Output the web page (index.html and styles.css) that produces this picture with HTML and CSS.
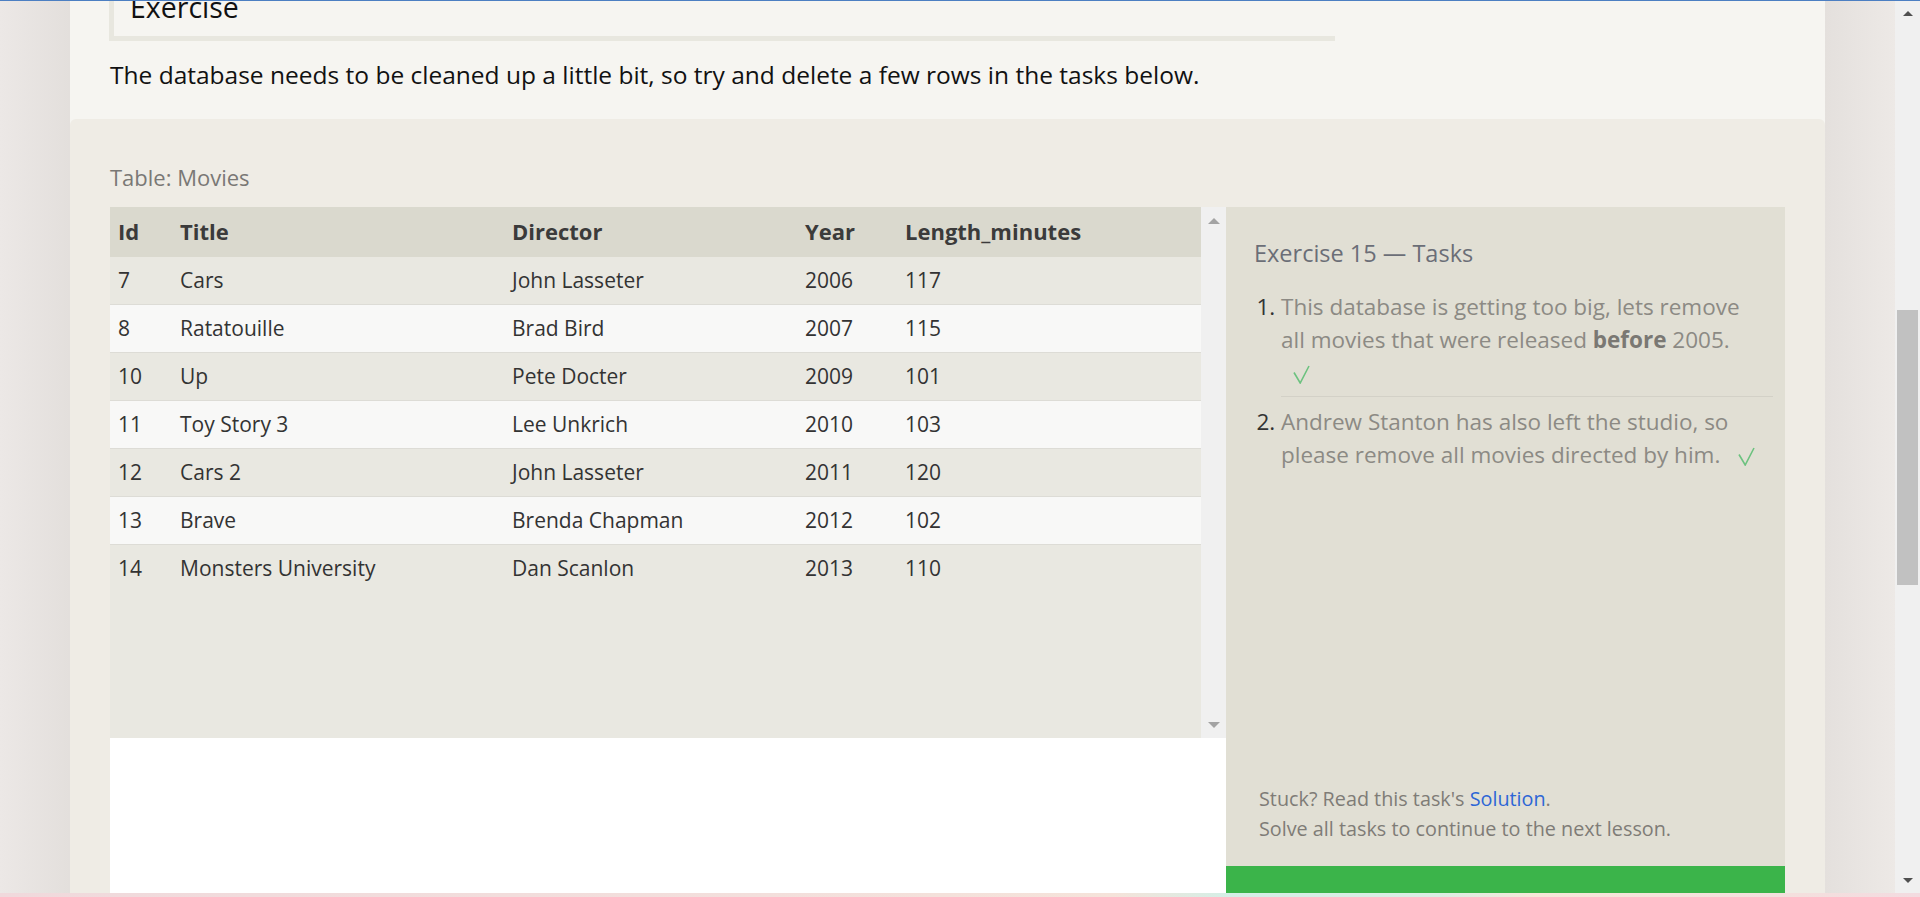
FILE: index.html
```html
<!DOCTYPE html>
<html lang="en">
<head>
<meta charset="utf-8">
<title>SQL Lesson — Deleting rows</title>
<link rel="stylesheet" href="styles.css">
</head>
<body>
<div class="topline"></div>
<div class="window">
  <div class="page">
    <div class="container">
      <section class="intro">
        <div class="exercise-box"><h2>Exercise</h2></div>
        <p>The database needs to be cleaned up a little bit, so try and delete a few rows in the tasks below.</p>
      </section>
      <section class="workspace">
        <div class="table-label">Table: Movies</div>
        <div class="work-row">
          <div class="left-col">
            <div class="table-wrap">
              <div class="table-scroll">
                <table class="movies">
                  <colgroup>
                    <col class="c-id"><col class="c-title"><col class="c-director"><col class="c-year"><col>
                  </colgroup>
                  <thead>
                    <tr><th>Id</th><th>Title</th><th>Director</th><th>Year</th><th>Length_minutes</th></tr>
                  </thead>
                  <tbody>
                    <tr><td>7</td><td>Cars</td><td>John Lasseter</td><td>2006</td><td>117</td></tr>
                    <tr><td>8</td><td>Ratatouille</td><td>Brad Bird</td><td>2007</td><td>115</td></tr>
                    <tr><td>10</td><td>Up</td><td>Pete Docter</td><td>2009</td><td>101</td></tr>
                    <tr><td>11</td><td>Toy Story 3</td><td>Lee Unkrich</td><td>2010</td><td>103</td></tr>
                    <tr><td>12</td><td>Cars 2</td><td>John Lasseter</td><td>2011</td><td>120</td></tr>
                    <tr><td>13</td><td>Brave</td><td>Brenda Chapman</td><td>2012</td><td>102</td></tr>
                    <tr><td>14</td><td>Monsters University</td><td>Dan Scanlon</td><td>2013</td><td>110</td></tr>
                  </tbody>
                </table>
              </div>
              <div class="inner-scrollbar">
                <span class="ibtn"><span class="tri-up-light"></span></span>
                <span class="ibtn"><span class="tri-down-light"></span></span>
              </div>
            </div>
            <div class="editor"></div>
          </div>
          <aside class="tasks">
            <h3>Exercise 15 — Tasks</h3>
            <ol>
              <li>This database is getting too big, lets remove all movies that were released <b>before</b> 2005. <svg class="check" width="17" height="19" viewBox="0 0 17 19" aria-label="done"><path d="M1 7.5 L7.2 18 L16 1" fill="none" stroke="#6cc27f" stroke-width="1.6"/></svg></li>
              <li>Andrew Stanton has also left the studio, so please remove all movies directed by him. <svg class="check" width="17" height="19" viewBox="0 0 17 19" aria-label="done"><path d="M1 7.5 L7.2 18 L16 1" fill="none" stroke="#6cc27f" stroke-width="1.6"/></svg></li>
            </ol>
            <div class="stuck">
              <div>Stuck? Read this task's <a href="#">Solution</a>.</div>
              <div>Solve all tasks to continue to the next lesson.</div>
            </div>
            <div class="continue"></div>
          </aside>
        </div>
      </section>
    </div>
  </div>
  <div class="vscroll">
    <span class="vbtn"><span class="tri-up-dark"></span></span>
    <span class="thumb"></span>
    <span class="vbtn bottom"><span class="tri-down-dark"></span></span>
  </div>
</div>
<div class="rainbow"></div>
</body>
</html>
```

FILE: styles.css
```css
* { box-sizing: border-box; }

html, body {
  margin: 0;
  padding: 0;
  height: 897px;
  overflow: hidden;
}

body {
  display: flex;
  flex-direction: column;
  font-family: "Open Sans", "Noto Sans", sans-serif;
  color: #222;
  background: #ece8e5;
}

.topline {
  height: 1px;
  background: #4c7fc2;
  flex: none;
}

.window {
  height: 892px;
  display: flex;
  overflow: hidden;
  flex: none;
}

.page {
  flex: 1;
  padding: 0 70px;
  background: linear-gradient(90deg, #ece8e6 0, #e3dfdc 70px, #e3dfdc 70px, #ece8e6 calc(100% - 70px), #e4e0dd calc(100% - 70px), #ede9e6 100%);
  overflow: hidden;
}

.container {
  width: 1755px;
  height: 100%;
  background: #f6f5f1;
  display: flex;
  flex-direction: column;
}

/* ---------- intro ---------- */
.intro {
  height: 118px;
  flex: none;
  padding: 0 40px;
}

.exercise-box {
  width: 1226px;
  margin: -22px 0 0 -1px;
  padding: 10px 16px 11px;
  border-left: 5px solid #e8e7df;
  border-bottom: 5px solid #e8e7df;
}

.exercise-box h2 {
  margin: 0;
  font-size: 28.5px;
  line-height: 36px;
  font-weight: 400;
  color: #111;
}

.intro p {
  margin: 18px 0 0;
  font-size: 24.5px;
  line-height: 32px;
  color: #111;
  white-space: nowrap;
}

/* ---------- workspace ---------- */
.workspace {
  flex: 1;
  background: #efece5;
  border-radius: 6px 6px 0 0;
  padding: 44px 40px 0;
  overflow: hidden;
}

.table-label {
  font-size: 22px;
  line-height: 28px;
  color: #7a7875;
  margin-bottom: 16px;
}

.work-row {
  display: flex;
  align-items: flex-start;
}

.left-col {
  width: 1116px;
  flex: none;
}

.table-wrap {
  height: 531px;
  display: flex;
  background: #e9e8e1;
}

.table-scroll {
  flex: 1;
  overflow: hidden;
}

.movies {
  width: 100%;
  table-layout: fixed;
  border-collapse: separate;
  border-spacing: 0;
  font-size: 21px;
  color: #333;
}

.c-id { width: 62px; }
.c-title { width: 332px; }
.c-director { width: 293px; }
.c-year { width: 100px; }

.movies th {
  background: #dad9ce;
  text-align: left;
  font-size: 22px;
  font-weight: 700;
  color: #3b3b3b;
  padding: 0 8px 2px;
  line-height: 48px;
  white-space: nowrap;
}

.movies td {
  padding: 0 8px;
  line-height: 47px;
  border-bottom: 1px solid #dddcd6;
  white-space: nowrap;
}

.movies tbody tr:nth-child(odd) td { background: #e9e8e1; }
.movies tbody tr:nth-child(even) td { background: #f8f8f7; }
.movies tbody tr:last-child td { border-bottom: none; }

.inner-scrollbar {
  width: 25px;
  flex: none;
  background: #f0f0f0;
  display: flex;
  flex-direction: column;
  justify-content: space-between;
}

.ibtn {
  height: 27px;
  display: flex;
  align-items: center;
  justify-content: center;
}

.tri-up-light {
  width: 0; height: 0;
  border-left: 6px solid transparent;
  border-right: 6px solid transparent;
  border-bottom: 6px solid #a3a3a3;
}

.tri-down-light {
  width: 0; height: 0;
  border-left: 6px solid transparent;
  border-right: 6px solid transparent;
  border-top: 6px solid #a3a3a3;
}

.editor {
  height: 188px;
  background: #fff;
}

/* ---------- tasks ---------- */
.tasks {
  width: 559px;
  height: 719px;
  flex: none;
  background: #e1dfd4;
  display: flex;
  flex-direction: column;
  padding: 31px 12px 0 28px;
}

.tasks h3 {
  margin: 0;
  font-size: 23.5px;
  line-height: 30px;
  font-weight: 400;
  color: #6b6e77;
}

.tasks ol {
  margin: 22px 0 0;
  padding-left: 27px;
  font-size: 22.5px;
  line-height: 33px;
  color: #8c8a84;
}

.tasks li {
  padding: 0 14px 7px 0;
  margin-bottom: 8px;
  border-bottom: 1px solid #d3d1c7;
}

.tasks li:last-child { border-bottom: none; }

.tasks li::marker { color: #333; }

.tasks b { color: #7a7873; }

.check {
  margin-left: 12px;
  vertical-align: -3px;
}

.stuck {
  margin-top: auto;
  margin-bottom: 22px;
  padding-left: 5px;
  font-size: 19.8px;
  line-height: 30px;
  color: #7f7c77;
}

.stuck a {
  color: #2d66d6;
  text-decoration: none;
}

.continue {
  height: 60px;
  flex: none;
  margin: 0 -12px 0 -28px;
  background: #3bb44a;
}

/* ---------- browser scrollbar ---------- */
.vscroll {
  width: 25px;
  flex: none;
  background: #f0f0f0;
  display: flex;
  flex-direction: column;
  align-items: center;
}

.vbtn {
  height: 25px;
  width: 100%;
  display: flex;
  align-items: center;
  justify-content: center;
  flex: none;
}

.vbtn.bottom { margin-top: auto; }

.thumb {
  width: 21px;
  height: 275px;
  margin-top: 284px;
  background: #c1c1c1;
}

.tri-up-dark {
  width: 0; height: 0;
  border-left: 5px solid transparent;
  border-right: 5px solid transparent;
  border-bottom: 5px solid #505050;
}

.tri-down-dark {
  width: 0; height: 0;
  border-left: 5px solid transparent;
  border-right: 5px solid transparent;
  border-top: 5px solid #505050;
}

.rainbow {
  height: 4px;
  flex: none;
  background: linear-gradient(90deg, #f0d9dc 0%, #f3dfdc 40%, #f5e3da 58%, #d4efe6 64%, #dbefe3 75%, #f6e8d8 80%, #f3dbe0 100%);
}
```
